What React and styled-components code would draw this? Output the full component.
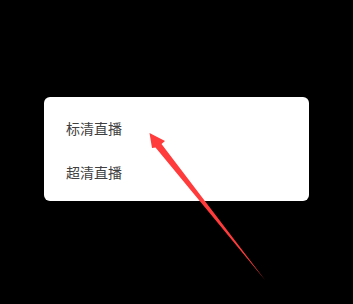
import React from "react";
import styled, { createGlobalStyle } from "styled-components";

const Global = createGlobalStyle`
  html, body { margin: 0; padding: 0; background: #000; }
  body { width: 353px; height: 304px; overflow: hidden; font-family: "Noto Sans CJK SC", "Noto Sans", sans-serif; }
`;

const Page = styled.div`
  position: relative;
  width: 353px;
  height: 304px;
  background: #000;
  padding: 97px 0 0 44px;
  box-sizing: border-box;
`;

const Menu = styled.div`
  width: 265px;
  height: 104px;
  box-sizing: border-box;
  background: #fff;
  border-radius: 6px;
  padding: 9px 0 0 22px;
  display: flex;
  flex-direction: column;
`;

const Item = styled.div`
  height: 44px;
  display: flex;
  align-items: center;
  font-size: 14px;
  color: #404040;
  letter-spacing: 0;
`;

const Overlay = styled.svg`
  position: absolute;
  left: 0;
  top: 0;
  pointer-events: none;
`;

export default function App() {
  return (
    <Page>
      <Global />
      <Menu>
        <Item>标清直播</Item>
        <Item>超清直播</Item>
      </Menu>
      <Overlay width="353" height="304" viewBox="0 0 353 304">
        <polygon
          points="149.5,133 165,141 161.5,144 265,280 155.5,147.5 152,148"
          fill="#ff3b3b"
        />
      </Overlay>
    </Page>
  );
}
